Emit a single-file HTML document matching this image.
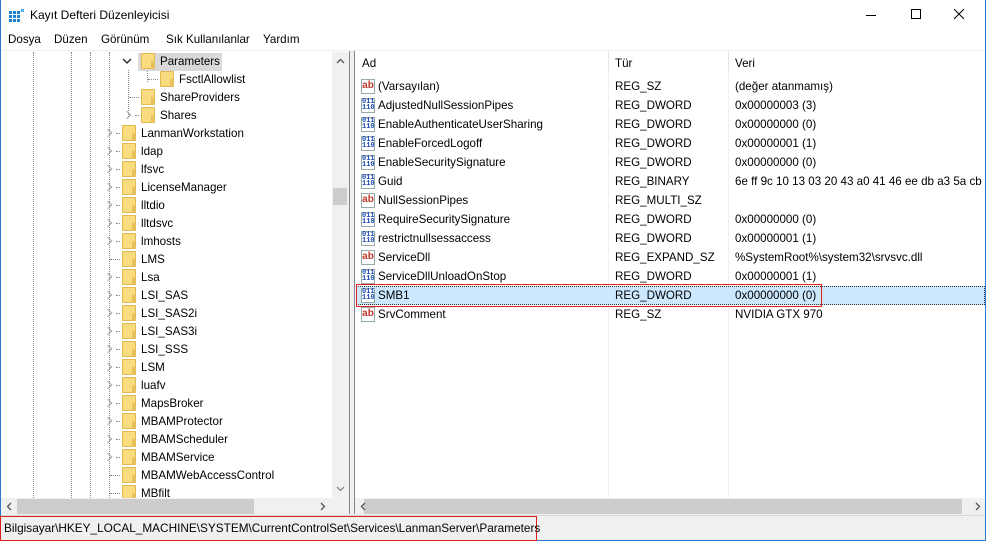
<!DOCTYPE html>
<html><head><meta charset="utf-8"><style>
*{margin:0;padding:0;box-sizing:border-box}
body{width:986px;height:541px;overflow:hidden;background:#fff;font-family:"Segoe UI","Liberation Sans",sans-serif;font-size:11.6px;color:#000;position:relative}
.a{position:absolute;white-space:nowrap}
.win{position:absolute;left:0;top:0;width:986px;height:541px;border:1px solid #2b79d0;border-top:none}
.fold{position:absolute;width:14px;height:16px;background:#f9dc7f;border:1px solid #e2b94c;border-radius:1px}
.fold:after{content:"";position:absolute;right:-1px;bottom:-1px;width:4px;height:8px;background:#e8c15a}
.t{position:absolute;height:18px;line-height:20px;white-space:nowrap}
.chev{position:absolute;width:10px;height:18px}
.chev:before{content:"";position:absolute;left:1px;top:6px;width:5px;height:5px;border-right:1.5px solid #a0a0a0;border-top:1.5px solid #a0a0a0;transform:rotate(45deg)}
.dot{position:absolute;border-top:1px dotted #888;height:0}
.vd{position:absolute;border-left:1px dotted #888;width:0}
.r{position:absolute;left:357px;height:19px;line-height:19px;width:628px}
.r span{position:absolute;white-space:nowrap}
.ic{position:absolute;left:4px;top:2px;width:14px;height:15px;border:1px solid #9aa;background:#fff;font-size:7px;line-height:6px;color:#1a4bb5;font-weight:bold;text-align:center;font-family:"Liberation Mono",monospace}
.ab{color:#c0392b;font-size:10px;line-height:12px;font-family:"Liberation Sans",sans-serif}
</style></head><body>
<div class="win"></div>
<svg class="a" style="left:9px;top:9px" width="16" height="14"><g fill="#1c82d6"><rect x="0" y="2" width="3" height="3"/><rect x="4" y="2" width="3" height="3"/><rect x="8" y="2" width="3" height="3"/><rect x="0" y="6" width="3" height="3"/><rect x="4" y="6" width="3" height="3"/><rect x="8" y="6" width="3" height="3"/><rect x="0" y="10" width="3" height="3"/><rect x="4" y="10" width="3" height="3"/><rect x="8" y="10" width="3" height="3"/><rect x="12" y="0" width="3" height="3" fill="#58b0f0"/></g></svg>
<div class="a" style="left:30px;top:8px;font-size:12px">Kayıt Defteri Düzenleyicisi</div>
<div class="a" style="left:866px;top:15px;width:10px;height:1px;background:#000"></div>
<div class="a" style="left:911px;top:9px;width:10px;height:10px;border:1px solid #000"></div>
<svg class="a" style="left:954px;top:9px" width="11" height="11"><path d="M0 0L10 10M10 0L0 10" stroke="#000" stroke-width="1"/></svg>
<div class="a" style="top:33px;left:8px">Dosya</div>
<div class="a" style="top:33px;left:54px">Düzen</div>
<div class="a" style="top:33px;left:101px">Görünüm</div>
<div class="a" style="top:33px;left:166px">Sık Kullanılanlar</div>
<div class="a" style="top:33px;left:263px">Yardım</div>
<div class="a" style="left:1px;top:50px;width:984px;height:465px;background:#f0f0f0"></div>
<div class="a" style="left:1px;top:51px;width:349px;height:463px;background:#fff;border-right:1px solid #828790"></div>
<div class="a" style="left:354px;top:51px;width:631px;height:463px;background:#fff;border-left:1px solid #828790"></div>
<div class="vd" style="left:33px;top:52px;height:446px"></div>
<div class="vd" style="left:71px;top:52px;height:446px"></div>
<div class="vd" style="left:90px;top:52px;height:446px"></div>
<div class="vd" style="left:109px;top:52px;height:446px"></div>
<div class="vd" style="left:128px;top:70px;height:47px"></div>
<div class="vd" style="left:147px;top:70px;height:12px"></div>
<div class="a" style="left:138px;top:53px;width:84px;height:18px;background:#d9d9d9"></div>
<svg class="a" style="left:122px;top:58px" width="10" height="7"><path d="M1 1L5 5L9 1" stroke="#333" stroke-width="1.5" fill="none"/></svg>
<div class="fold" style="left:141px;top:53px"></div><div class="t" style="left:160px;top:52px">Parameters</div>
<div class="dot" style="left:148px;top:79px;width:10px"></div><div class="fold" style="left:160px;top:71px"></div><div class="t" style="left:179px;top:70px">FsctlAllowlist</div>
<div class="dot" style="left:129px;top:97px;width:10px"></div><div class="fold" style="left:141px;top:89px"></div><div class="t" style="left:160px;top:88px">ShareProviders</div>
<div class="chev" style="left:123px;top:106px"></div><div class="dot" style="left:135px;top:115px;width:4px"></div><div class="fold" style="left:141px;top:107px"></div><div class="t" style="left:160px;top:106px">Shares</div>

<div class="chev" style="left:104px;top:124px"></div><div class="dot" style="left:116px;top:133px;width:4px"></div><div class="fold" style="left:122px;top:125px"></div><div class="t" style="left:141px;top:124px">LanmanWorkstation</div>
<div class="chev" style="left:104px;top:142px"></div><div class="dot" style="left:116px;top:151px;width:4px"></div><div class="fold" style="left:122px;top:143px"></div><div class="t" style="left:141px;top:142px">ldap</div>
<div class="chev" style="left:104px;top:160px"></div><div class="dot" style="left:116px;top:169px;width:4px"></div><div class="fold" style="left:122px;top:161px"></div><div class="t" style="left:141px;top:160px">lfsvc</div>
<div class="chev" style="left:104px;top:178px"></div><div class="dot" style="left:116px;top:187px;width:4px"></div><div class="fold" style="left:122px;top:179px"></div><div class="t" style="left:141px;top:178px">LicenseManager</div>
<div class="chev" style="left:104px;top:196px"></div><div class="dot" style="left:116px;top:205px;width:4px"></div><div class="fold" style="left:122px;top:197px"></div><div class="t" style="left:141px;top:196px">lltdio</div>
<div class="chev" style="left:104px;top:214px"></div><div class="dot" style="left:116px;top:223px;width:4px"></div><div class="fold" style="left:122px;top:215px"></div><div class="t" style="left:141px;top:214px">lltdsvc</div>
<div class="chev" style="left:104px;top:232px"></div><div class="dot" style="left:116px;top:241px;width:4px"></div><div class="fold" style="left:122px;top:233px"></div><div class="t" style="left:141px;top:232px">lmhosts</div>
<div class="dot" style="left:110px;top:259px;width:10px"></div><div class="fold" style="left:122px;top:251px"></div><div class="t" style="left:141px;top:250px">LMS</div>
<div class="chev" style="left:104px;top:268px"></div><div class="dot" style="left:116px;top:277px;width:4px"></div><div class="fold" style="left:122px;top:269px"></div><div class="t" style="left:141px;top:268px">Lsa</div>
<div class="chev" style="left:104px;top:286px"></div><div class="dot" style="left:116px;top:295px;width:4px"></div><div class="fold" style="left:122px;top:287px"></div><div class="t" style="left:141px;top:286px">LSI_SAS</div>
<div class="chev" style="left:104px;top:304px"></div><div class="dot" style="left:116px;top:313px;width:4px"></div><div class="fold" style="left:122px;top:305px"></div><div class="t" style="left:141px;top:304px">LSI_SAS2i</div>
<div class="chev" style="left:104px;top:322px"></div><div class="dot" style="left:116px;top:331px;width:4px"></div><div class="fold" style="left:122px;top:323px"></div><div class="t" style="left:141px;top:322px">LSI_SAS3i</div>
<div class="chev" style="left:104px;top:340px"></div><div class="dot" style="left:116px;top:349px;width:4px"></div><div class="fold" style="left:122px;top:341px"></div><div class="t" style="left:141px;top:340px">LSI_SSS</div>
<div class="chev" style="left:104px;top:358px"></div><div class="dot" style="left:116px;top:367px;width:4px"></div><div class="fold" style="left:122px;top:359px"></div><div class="t" style="left:141px;top:358px">LSM</div>
<div class="chev" style="left:104px;top:376px"></div><div class="dot" style="left:116px;top:385px;width:4px"></div><div class="fold" style="left:122px;top:377px"></div><div class="t" style="left:141px;top:376px">luafv</div>
<div class="chev" style="left:104px;top:394px"></div><div class="dot" style="left:116px;top:403px;width:4px"></div><div class="fold" style="left:122px;top:395px"></div><div class="t" style="left:141px;top:394px">MapsBroker</div>
<div class="chev" style="left:104px;top:412px"></div><div class="dot" style="left:116px;top:421px;width:4px"></div><div class="fold" style="left:122px;top:413px"></div><div class="t" style="left:141px;top:412px">MBAMProtector</div>
<div class="chev" style="left:104px;top:430px"></div><div class="dot" style="left:116px;top:439px;width:4px"></div><div class="fold" style="left:122px;top:431px"></div><div class="t" style="left:141px;top:430px">MBAMScheduler</div>
<div class="chev" style="left:104px;top:448px"></div><div class="dot" style="left:116px;top:457px;width:4px"></div><div class="fold" style="left:122px;top:449px"></div><div class="t" style="left:141px;top:448px">MBAMService</div>
<div class="dot" style="left:110px;top:475px;width:10px"></div><div class="fold" style="left:122px;top:467px"></div><div class="t" style="left:141px;top:466px">MBAMWebAccessControl</div>
<div class="dot" style="left:110px;top:493px;width:10px"></div><div class="fold" style="left:122px;top:485px"></div><div class="t" style="left:141px;top:484px">MBfilt</div>
<div class="a" style="left:332px;top:52px;width:17px;height:446px;background:#f0f0f0"></div>
<div class="a" style="left:333px;top:188px;width:14px;height:17px;background:#cdcdcd"></div>
<svg class="a" style="left:336px;top:58px" width="9" height="6"><path d="M1 5L4.5 1.5L8 5" stroke="#555" stroke-width="1.3" fill="none"/></svg>
<svg class="a" style="left:336px;top:486px" width="9" height="6"><path d="M1 1L4.5 4.5L8 1" stroke="#888" stroke-width="1.3" fill="none"/></svg>
<div class="a" style="left:1px;top:498px;width:348px;height:17px;background:#f0f0f0"></div>
<div class="a" style="left:17px;top:499px;width:237px;height:15px;background:#cdcdcd"></div>
<svg class="a" style="left:6px;top:502px" width="6" height="9"><path d="M5 1L1.5 4.5L5 8" stroke="#555" stroke-width="1.3" fill="none"/></svg>
<svg class="a" style="left:320px;top:502px" width="6" height="9"><path d="M1 1L4.5 4.5L1 8" stroke="#555" stroke-width="1.3" fill="none"/></svg>
<div class="a" style="left:332px;top:498px;width:17px;height:17px;background:#f0f0f0"></div>
<div class="a" style="left:355px;top:52px;width:630px;height:22px;background:#fff"></div>
<div class="a" style="left:362px;top:57px">Ad</div>
<div class="a" style="left:608px;top:52px;width:1px;height:22px;background:#e5e5e5"></div>
<div class="a" style="left:615px;top:57px">Tür</div>
<div class="a" style="left:728px;top:52px;width:1px;height:22px;background:#e5e5e5"></div>
<div class="a" style="left:735px;top:57px">Veri</div>
<div class="a" style="left:608px;top:74px;width:1px;height:424px;background:#eef2f8"></div>
<div class="a" style="left:728px;top:74px;width:1px;height:424px;background:#eef2f8"></div>
<div class="a" style="left:356px;top:286px;width:629px;height:19px;background:#cce8ff;border:1px dotted #333"></div>
<div class="a" style="left:356px;top:284px;width:466px;height:23px;border:1px solid #e0201f"></div>
<div class="r" style="top:77px"><div class="ic ab">ab</div><span style="left:21px">(Varsayılan)</span><span style="left:258px">REG_SZ</span><span style="left:378px">(değer atanmamış)</span></div>
<div class="r" style="top:96px"><div class="ic">011<br>110</div><span style="left:21px">AdjustedNullSessionPipes</span><span style="left:258px">REG_DWORD</span><span style="left:378px">0x00000003 (3)</span></div>
<div class="r" style="top:115px"><div class="ic">011<br>110</div><span style="left:21px">EnableAuthenticateUserSharing</span><span style="left:258px">REG_DWORD</span><span style="left:378px">0x00000000 (0)</span></div>
<div class="r" style="top:134px"><div class="ic">011<br>110</div><span style="left:21px">EnableForcedLogoff</span><span style="left:258px">REG_DWORD</span><span style="left:378px">0x00000001 (1)</span></div>
<div class="r" style="top:153px"><div class="ic">011<br>110</div><span style="left:21px">EnableSecuritySignature</span><span style="left:258px">REG_DWORD</span><span style="left:378px">0x00000000 (0)</span></div>
<div class="r" style="top:172px"><div class="ic">011<br>110</div><span style="left:21px">Guid</span><span style="left:258px">REG_BINARY</span><span style="left:378px">6e ff 9c 10 13 03 20 43 a0 41 46 ee db a3 5a cb</span></div>
<div class="r" style="top:191px"><div class="ic ab">ab</div><span style="left:21px">NullSessionPipes</span><span style="left:258px">REG_MULTI_SZ</span></div>
<div class="r" style="top:210px"><div class="ic">011<br>110</div><span style="left:21px">RequireSecuritySignature</span><span style="left:258px">REG_DWORD</span><span style="left:378px">0x00000000 (0)</span></div>
<div class="r" style="top:229px"><div class="ic">011<br>110</div><span style="left:21px">restrictnullsessaccess</span><span style="left:258px">REG_DWORD</span><span style="left:378px">0x00000001 (1)</span></div>
<div class="r" style="top:248px"><div class="ic ab">ab</div><span style="left:21px">ServiceDll</span><span style="left:258px">REG_EXPAND_SZ</span><span style="left:378px">%SystemRoot%\system32\srvsvc.dll</span></div>
<div class="r" style="top:267px"><div class="ic">011<br>110</div><span style="left:21px">ServiceDllUnloadOnStop</span><span style="left:258px">REG_DWORD</span><span style="left:378px">0x00000001 (1)</span></div>
<div class="r" style="top:286px"><div class="ic">011<br>110</div><span style="left:21px">SMB1</span><span style="left:258px">REG_DWORD</span><span style="left:378px">0x00000000 (0)</span></div>
<div class="r" style="top:305px"><div class="ic ab">ab</div><span style="left:21px">SrvComment</span><span style="left:258px">REG_SZ</span><span style="left:378px">NVIDIA GTX 970</span></div>
<div class="a" style="left:355px;top:498px;width:630px;height:17px;background:#f0f0f0"></div>
<div class="a" style="left:364px;top:499px;width:598px;height:15px;background:#cdcdcd"></div>
<svg class="a" style="left:360px;top:502px" width="6" height="9"><path d="M5 1L1.5 4.5L5 8" stroke="#555" stroke-width="1.3" fill="none"/></svg>
<svg class="a" style="left:975px;top:502px" width="6" height="9"><path d="M1 1L4.5 4.5L1 8" stroke="#555" stroke-width="1.3" fill="none"/></svg>
<div class="a" style="left:1px;top:515px;width:984px;height:25px;background:#f0f0f0;border-top:1px solid #d7d7d7"></div>
<div class="a" style="left:0px;top:516px;width:537px;height:25px;border:1px solid #e0201f"></div>
<div class="a" style="left:4px;top:521px;font-size:11.8px">Bilgisayar\HKEY_LOCAL_MACHINE\SYSTEM\CurrentControlSet\Services\LanmanServer\Parameters</div>
</body></html>
